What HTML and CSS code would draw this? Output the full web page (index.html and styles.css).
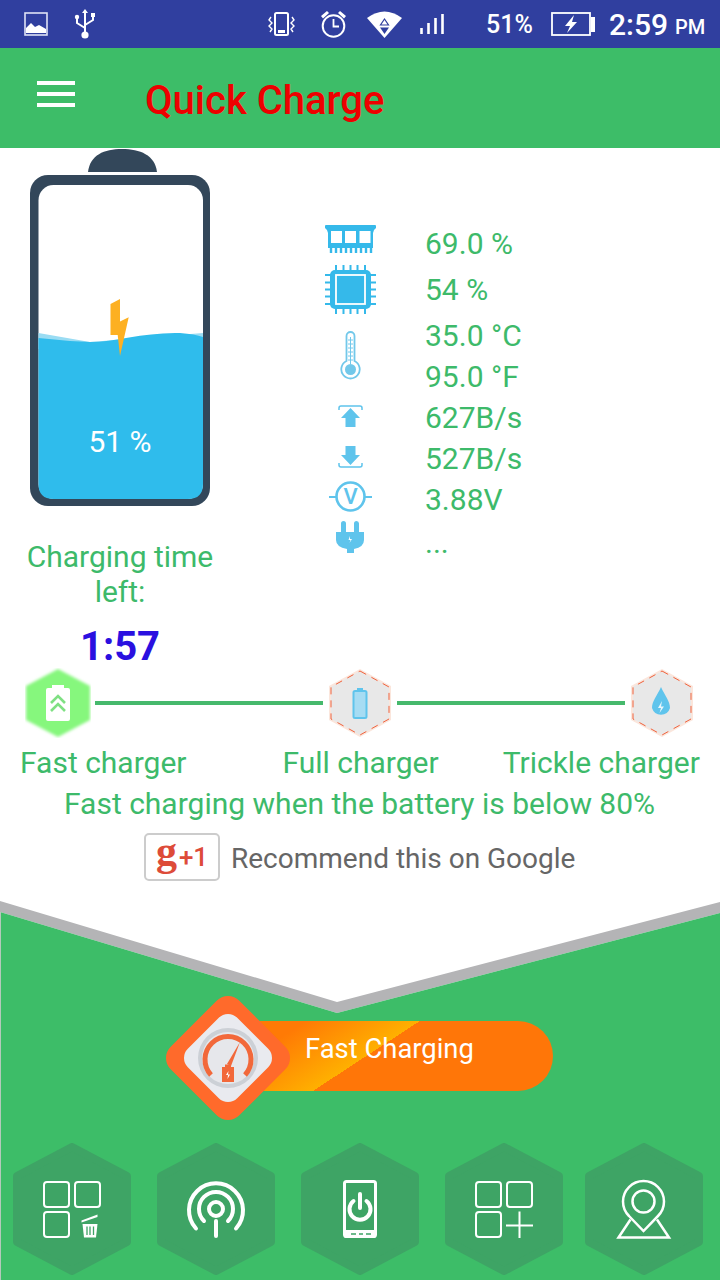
FILE: index.html
```html
<!DOCTYPE html>
<html lang="en">
<head>
    <meta charset="UTF-8">
    <meta name="viewport" content="width=device-width, initial-scale=1.0">
    <title>Quick Charge</title>
    <link rel="stylesheet" href="styles.css">
</head>
<body>

    <!-- Status bar -->
    <div class="status-bar">
        <svg class="st-image" width="24" height="24" viewBox="0 0 24 24"><rect x="1" y="1" width="22" height="22" fill="none" stroke="#dfe3f5" stroke-width="1.6"/><path d="M2 21V16L7 11L11 15L15 13L22 17V21Z" fill="#fff"/></svg>
        <svg class="st-usb" width="22" height="30" viewBox="0 0 22 30"><path d="M11 2V24M11 19L3 14V9M11 16L19 11V7" fill="none" stroke="#fff" stroke-width="2"/><path d="M11 0L14 4H8Z" fill="#fff"/><circle cx="11" cy="26" r="3.6" fill="#fff"/><circle cx="3" cy="8" r="2.2" fill="#fff"/><rect x="17" y="4" width="4" height="4" fill="#fff"/></svg>
        <svg class="st-vibrate" width="27" height="24" viewBox="0 0 27 24"><rect x="7" y="1" width="13" height="22" rx="1.5" fill="none" stroke="#fff" stroke-width="2"/><rect x="10" y="18" width="7" height="3" fill="#fff"/><path d="M3 5L1 8L4 11L1 14L4 17L2 20M24 5L26 8L23 11L26 14L23 17L25 20" fill="none" stroke="#fff" stroke-width="1.4"/></svg>
        <svg class="st-alarm" width="27" height="28" viewBox="0 0 27 28"><circle cx="13.5" cy="16" r="10.8" fill="none" stroke="#fff" stroke-width="2"/><path d="M13.5 9V16.5H19" fill="none" stroke="#fff" stroke-width="1.8"/><path d="M1 6L7 1L9 3L3 8.5ZM26 6L20 1L18 3L24 8.5Z" fill="#fff"/></svg>
        <svg class="st-wifi" width="35" height="27" viewBox="0 0 35 27"><path d="M0 7Q17.5 -6 35 7L17.5 27Z" fill="#fff"/><path d="M17.5 8L21.5 14H13.5Z" fill="none" stroke="#303f9f" stroke-width="1.2"/><path d="M13 16.5H22L17.5 23Z" fill="#303f9f"/></svg>
        <svg class="st-signal" width="24" height="20" viewBox="0 0 24 20"><path d="M1.5 14V20M8.5 9V20M15.5 4V20M22.5 0V20" stroke="#fff" stroke-width="2.6"/></svg>
        <span class="st-level">51%</span>
        <svg class="st-battery" width="44" height="24" viewBox="0 0 44 24"><rect x="1" y="1" width="38" height="22" fill="none" stroke="#fff" stroke-width="1.8"/><rect x="40" y="5" width="4" height="15" fill="#fff"/><path d="M23 3L14 14H19L16 21L26 10H21Z" fill="#fff"/></svg>
        <span class="st-time">2:59</span>
        <span class="st-ampm">PM</span>
    </div>

    <!-- Toolbar -->
    <div class="toolbar">
        <div class="menu-btn"><span></span><span></span><span></span></div>
        <div class="toolbar-title">Quick Charge</div>
    </div>

    <!-- Battery and stats -->
    <div class="top-panel">
        <div class="battery-col">
            <div class="battery">
                <svg width="180" height="357" viewBox="0 0 180 357">
                    <path d="M58 23C60 6 74 0 92 0C110 0 125 6 127 23Z" fill="#33475a"/>
                    <rect x="0" y="26" width="180" height="331" rx="18" fill="#33475a"/>
                    <rect x="8.500" y="36" width="164.500" height="314" rx="15" fill="#fff"/>
                    <path d="M8.500 184L60 193L173 184V200H8.500Z" fill="#9adcf3"/>
                    <path d="M8.500 189Q35 192 60 193C85 193 115 183 150 184Q165 185 173 188V335Q173 350 158 350H23.500Q8.500 350 8.500 335Z" fill="#2fbcec"/>
                    <path d="M80.500 155L90 150V172.500L98.700 168.300L90 207L87.700 186H80.500Z" fill="#fdb022"/>
                </svg>
                <div class="battery-level">51 %</div>
            </div>
            <div class="time-label">Charging time left:</div>
            <div class="time-value">1:57</div>
        </div>

        <div class="stat-icons">
            <svg class="ic-ram" width="51" height="28" viewBox="0 0 51 28"><path d="M0 1Q0 0 1 0H50Q51 0 51 1V3Q48 5 48 8V23H3V8Q3 5 0 3Z" fill="#35b9ea"/><path d="M6 6H17V18H6ZM20 6H31V18H20ZM34.500 6H45.500V18H34.500Z" fill="#fff"/><path d="M6 22V28M11 22V28M16 22V28M21 22V28M26 22V28M31 22V28M36 22V28M41 22V28M46 22V28" stroke="#35b9ea" stroke-width="2.400"/></svg>
            <svg class="ic-cpu" width="51" height="49" viewBox="0 0 51 49"><path d="M11 0V6M18.500 0V6M25.500 0V6M32.500 0V6M40 0V6M11 43V49M18.500 43V49M25.500 43V49M32.500 43V49M40 43V49M0 10H6M0 17.500H6M0 24.500H6M0 31.500H6M0 39H6M45 10H51M45 17.500H51M45 24.500H51M45 31.500H51M45 39H51" stroke="#35b9ea" stroke-width="2"/><rect x="5" y="5" width="41" height="39" rx="5" fill="#35b9ea"/><rect x="11" y="10" width="29" height="29" fill="#35b9ea" stroke="#fff" stroke-width="1.800"/></svg>
            <svg class="ic-thermo" width="21" height="49" viewBox="0 0 21 49"><path d="M6.500 30V5A4 4 0 0 1 14.500 5V30A9.200 9.200 0 1 1 6.500 30Z" fill="#fff" stroke="#72c8ea" stroke-width="1.800"/><circle cx="10.500" cy="38.500" r="5.500" fill="#72c8ea"/><path d="M10.500 6V33M8 9H13M8 13H13M8 17H13M8 21H13M8 25H13M8 29H13" stroke="#72c8ea" stroke-width="1"/></svg>
            <svg class="ic-up" width="25" height="22" viewBox="0 0 25 22"><path d="M1 5V3Q1 1 3 1H22Q24 1 24 3V5" fill="none" stroke="#5fc4ec" stroke-width="1.500"/><path d="M12.500 3L22 13H17.500V22H7.500V13H3Z" fill="#5fc4ec"/></svg>
            <svg class="ic-down" width="25" height="22" viewBox="0 0 25 22"><path d="M1 17V19Q1 21 3 21H22Q24 21 24 19V17" fill="none" stroke="#5fc4ec" stroke-width="1.500"/><path d="M12.500 19L22 9H17.500V0H7.500V9H3Z" fill="#5fc4ec"/></svg>
            <svg class="ic-volt" width="43" height="31" viewBox="0 0 43 31"><circle cx="21.500" cy="15.500" r="14" fill="none" stroke="#5fc4ec" stroke-width="2.600"/><path d="M0 16H7M36 16H43" stroke="#5fc4ec" stroke-width="2.200"/><text x="21.500" y="23" text-anchor="middle" class="volt-letter">V</text></svg>
            <svg class="ic-plug" width="28" height="32" viewBox="0 0 28 32"><path d="M5 2.500A2.500 2.500 0 0 1 10 2.500V11H18V2.500A2.500 2.500 0 0 1 23 2.500V11H28V19Q28 26 18 28V32H11V28Q0 26 0 19V11H5Z" fill="#5fc4ec"/><path d="M14 15L12.500 19H14.500L13.500 22L16 18H14Z" fill="#fff"/></svg>
        </div>

        <div class="stat-values">
            <div class="stat first">69.0 %</div>
            <div class="stat far">54 %</div>
            <div class="stat far">35.0 °C</div>
            <div class="stat">95.0 °F</div>
            <div class="stat">627B/s</div>
            <div class="stat">527B/s</div>
            <div class="stat">3.88V</div>
            <div class="stat near">...</div>
        </div>
    </div>

    <!-- Charge stages -->
    <div class="stages">
        <svg width="66" height="70" viewBox="0 0 66 70">
            <defs>
                <filter id="glow" x="-20%" y="-20%" width="140%" height="140%"><feGaussianBlur stdDeviation="1.600"/></filter>
            </defs>
            <path d="M33 1L65 18V52L33 69L1 52V18Z" fill="#86f77d" filter="url(#glow)"/>
            <path d="M27 20V17H39V20H43Q45 20 45 22V51Q45 53 43 53H23Q21 53 21 51V22Q21 20 23 20Z" fill="#fff"/>
            <path d="M26 35L33 28L40 35M26 43L33 36L40 43" fill="none" stroke="#7fe083" stroke-width="2.600"/>
        </svg>
        <div class="stage-line"></div>
        <svg width="66" height="70" viewBox="0 0 66 70">
            <path d="M33 1L64 18V52L33 69L2 52V18Z" fill="#fbe6dc"/>
            <path d="M33 3L62 19V51L33 67L4 51V19Z" fill="#e8e8e8" stroke="#f0623c" stroke-width="1" stroke-dasharray="7 6"/>
            <rect x="26.500" y="23" width="13" height="27" rx="1.500" fill="#a6dcf3" stroke="#5fc4ec" stroke-width="2"/>
            <rect x="30" y="20" width="6" height="3" fill="#5fc4ec"/>
        </svg>
        <div class="stage-line"></div>
        <svg width="66" height="70" viewBox="0 0 66 70">
            <path d="M33 1L64 18V52L33 69L2 52V18Z" fill="#fbe6dc"/>
            <path d="M33 3L62 19V51L33 67L4 51V19Z" fill="#e8e8e8" stroke="#f0623c" stroke-width="1" stroke-dasharray="7 6"/>
            <path d="M32 19C36 28 41 33 41 40A9.500 10 0 0 1 23 40C23 33 28 28 32 19Z" fill="#5fc4ec"/>
            <path d="M33 33L29 40H32L30.500 45L35 38.500H32Z" fill="#e8f6fc"/>
        </svg>
    </div>
    <div class="stage-labels">
        <span class="lbl-fast">Fast charger</span>
        <span class="lbl-full">Full charger</span>
        <span class="lbl-trickle">Trickle charger</span>
    </div>
    <div class="stage-hint">Fast charging when the battery is below 80%</div>

    <div class="plus-row">
        <div class="plus-btn"><span class="plus-g">g</span><span class="plus-one">+1</span></div>
        <span class="plus-text">Recommend this on Google</span>
    </div>

    <!-- Bottom panel -->
    <div class="bottom-panel">
        <svg class="panel-bg" width="720" height="379" viewBox="0 0 720 379">
            <path d="M0 0L337 101L720 1V12L337 112L0 11Z" fill="#b4b4b6"/>
            <path d="M0 11L337 112L720 12V379H0Z" fill="#3dbd68"/>
            <rect x="0" y="11" width="1" height="368" fill="#b4c9bb"/>
        </svg>

        <div class="mode">
            <svg class="mode-icon" width="124" height="124" viewBox="0 0 124 124">
                <defs>
                    <linearGradient id="faceGrad" x1="0" y1="0" x2="1" y2="1"><stop offset="0" stop-color="#eef0f4"/><stop offset="1" stop-color="#dfe1e7"/></linearGradient>
                </defs>
                <path d="M62 16L108 62L62 108L16 62Z" fill="#ff6a2b" stroke="#ff6a2b" stroke-width="32" stroke-linejoin="round"/>
                <path d="M62 31L93 62L62 93L31 62Z" fill="url(#faceGrad)" stroke="#e9eaef" stroke-width="26" stroke-linejoin="round"/>
                <circle cx="62" cy="62" r="30" fill="#ccd0d6"/>
                <circle cx="62" cy="62" r="26" fill="#e6e7eb"/>
                <path d="M45 79A23 23 0 1 1 79 79" fill="none" stroke="#f2683a" stroke-width="5"/>
                <path d="M61 68L74 46L65 70Z" fill="#f2683a"/>
                <path d="M56 71H59V68.500H65V71H68V86H56Z" fill="#f2683a"/>
                <path d="M62.500 75L60 79H62L61.500 83L64 78.500H62Z" fill="#fff"/>
            </svg>
            <div class="mode-pill">Fast Charging</div>
        </div>

        <div class="tools">
            <svg class="tile" width="118" height="132" viewBox="0 0 118 132">
                <path class="tile-hex" d="M59 4L114 33V99L59 128L4 99V33Z"/>
                <g class="tile-line">
                    <rect x="31" y="39" width="25" height="25" rx="3"/>
                    <rect x="62" y="39" width="25" height="25" rx="3"/>
                    <rect x="31" y="69" width="25" height="25" rx="3"/>
                </g>
                <path d="M68.500 77.500L84.500 71.500V74L68.500 79.500Z" fill="#fff"/>
                <path d="M69.500 81H84.500L83 94.500H71Z" fill="#fff"/>
                <path d="M74 83.500V92M77 83.500V92M80.500 83.500V92" stroke="#3ea465" stroke-width="1.300"/>
            </svg>
            <svg class="tile" width="118" height="132" viewBox="0 0 118 132">
                <path class="tile-hex" d="M59 4L114 33V99L59 128L4 99V33Z"/>
                <g class="tile-wide">
                    <circle cx="59" cy="66" r="7"/>
                    <path d="M47 78A17 17 0 1 1 71 78"/>
                    <path d="M39 85.500A27 27 0 1 1 79 85.500"/>
                    <path d="M59 78V93"/>
                </g>
            </svg>
            <svg class="tile" width="118" height="132" viewBox="0 0 118 132">
                <path class="tile-hex" d="M59 4L114 33V99L59 128L4 99V33Z"/>
                <rect x="43.500" y="38.500" width="31" height="55" rx="2" fill="none" stroke="#fff" stroke-width="3"/>
                <rect x="43" y="87" width="32" height="8" rx="2" fill="#fff"/>
                <path d="M50 91H55M58 91H62M65 91H70" stroke="#3ea465" stroke-width="1.500"/>
                <g class="tile-wide">
                    <path d="M52.500 58A10.500 10.500 0 1 0 65.500 58"/>
                    <path d="M59 51V65"/>
                </g>
            </svg>
            <svg class="tile" width="118" height="132" viewBox="0 0 118 132">
                <path class="tile-hex" d="M59 4L114 33V99L59 128L4 99V33Z"/>
                <g class="tile-line">
                    <rect x="31" y="39" width="25" height="25" rx="3"/>
                    <rect x="62" y="39" width="25" height="25" rx="3"/>
                    <rect x="31" y="69" width="25" height="25" rx="3"/>
                    <path d="M74.500 68.500V95M61 82.500H88"/>
                </g>
            </svg>
            <svg class="tile tile-last" width="118" height="132" viewBox="0 0 118 132">
                <path class="tile-hex" d="M59 4L114 33V99L59 128L4 99V33Z"/>
                <g class="tile-line thick">
                    <path d="M44 73A20.500 20.500 0 1 1 73 73L58.500 88Z"/>
                    <circle cx="58.500" cy="58.500" r="11"/>
                    <path d="M45.500 76.500L33.500 94.500H84L72 76.500"/>
                </g>
            </svg>
        </div>
    </div>

</body>
</html>
```

FILE: styles.css
```css
body {
    font-family: Roboto, "Liberation Sans", sans-serif;
    margin: 0;
    padding: 0;
    width: 720px;
    height: 1280px;
    overflow: hidden;
    background-color: #fff;
    color: #3dba6a;
}

svg {
    display: block;
    flex: none;
}

/* Status bar */
.status-bar {
    height: 48px;
    background-color: #303f9f;
    color: #fff;
    display: flex;
    align-items: center;
    padding-left: 24px;
}

.st-usb { margin-left: 26px; }
.st-vibrate { margin-left: 172px; }
.st-alarm { margin-left: 25px; }
.st-wifi { margin-left: 20px; }
.st-signal { margin-left: 18px; }
.st-battery { margin-left: 20px; }

.st-level {
    margin-left: 42px;
    font-size: 25px;
    font-weight: 500;
    width: 45px;
    white-space: nowrap;
}

.st-time {
    margin-left: 14px;
    font-size: 30px;
    font-weight: 500;
}

.st-ampm {
    margin-left: 7px;
    margin-top: 6px;
    font-size: 20px;
    font-weight: 500;
}

/* Toolbar */
.toolbar {
    height: 100px;
    background-color: #3dbd68;
    display: flex;
    align-items: center;
    padding-left: 37px;
}

.menu-btn {
    display: flex;
    flex-direction: column;
    gap: 7px;
    width: 38px;
    margin-right: 70px;
    margin-top: -8px;
}

.menu-btn span {
    height: 4px;
    background-color: #fff;
}

.toolbar-title {
    font-size: 40px;
    font-weight: 500;
    color: #ee0000;
    margin-top: 4px;
}

/* Battery and stats */
.top-panel {
    height: 520px;
    display: flex;
}

.battery-col {
    width: 240px;
    text-align: center;
}

.battery {
    position: relative;
    width: 180px;
    margin: 1px 0 0 30px;
}

.battery-level {
    position: absolute;
    left: 0;
    right: 0;
    top: 275px;
    text-align: center;
    color: #fff;
    font-size: 30px;
}

.time-label {
    font-size: 30px;
    line-height: 35px;
    margin: 33px 20px 0;
}

.time-value {
    font-size: 40px;
    font-weight: 700;
    line-height: 47px;
    color: #2a10e0;
    margin-top: 14px;
}

.stat-icons {
    width: 60px;
    margin-left: 80px;
    display: flex;
    flex-direction: column;
    align-items: center;
    padding-top: 77px;
}

.ic-cpu { margin-top: 12px; }
.ic-thermo { margin-top: 17px; }
.ic-up { margin-top: 25px; }
.ic-down { margin-top: 19px; }
.ic-volt { margin-top: 13px; }
.ic-plug { margin-top: 9px; }

.volt-letter {
    font-family: Roboto, sans-serif;
    font-size: 22px;
    font-weight: 500;
    fill: #5fc4ec;
}

.stat-values {
    margin-left: 45px;
    padding-top: 75px;
    font-size: 30px;
}

.stat {
    height: 41px;
    line-height: 41px;
}

.stat.far { margin-top: 5px; }
.stat.near { margin-top: 2px; }

/* Charge stages */
.stages {
    display: flex;
    align-items: center;
    gap: 4px;
    padding: 0 25px;
}

.stage-line {
    flex: 1;
    height: 4px;
    background-color: #46b96c;
}

.stage-labels {
    font-size: 30px;
    line-height: 40px;
    display: flex;
    padding-left: 20px;
    margin-top: 5px;
    white-space: nowrap;
}

.lbl-full { margin-left: 96px; }
.lbl-trickle { margin-left: 64px; }

.stage-hint {
    font-size: 30px;
    line-height: 40px;
    margin-top: 1px;
    padding-left: 64px;
    white-space: nowrap;
}

.plus-row {
    display: flex;
    align-items: center;
    padding-left: 144px;
    margin-top: 9px;
}

.plus-btn {
    width: 72px;
    height: 44px;
    border: 2px solid #cccccc;
    border-radius: 5px;
    display: flex;
    align-items: center;
    justify-content: center;
    color: #dd4b39;
}

.plus-g {
    font-family: "Liberation Serif", serif;
    font-weight: 700;
    font-size: 42px;
    line-height: 44px;
    margin-top: -12px;
}

.plus-one {
    font-size: 26px;
    font-weight: 500;
    margin-left: 2px;
}

.plus-text {
    font-size: 28px;
    color: #666666;
    margin-left: 11px;
    margin-top: 2px;
    white-space: nowrap;
}

/* Bottom panel */
.bottom-panel {
    position: absolute;
    left: 0;
    right: 0;
    top: 901px;
    height: 379px;
    padding-top: 95px;
    box-sizing: border-box;
}

.panel-bg {
    position: absolute;
    left: 0;
    top: 0;
}

.mode {
    position: relative;
    display: flex;
    align-items: center;
    margin-left: 166px;
}

.mode-icon {
    position: relative;
    z-index: 1;
}

.mode-pill {
    width: 325px;
    height: 70px;
    line-height: 56px;
    box-sizing: border-box;
    margin: -4px 0 0 -62px;
    padding-left: 77px;
    border-radius: 0 35px 35px 0;
    background: linear-gradient(146.800deg, #ff7a05 18%, #ffb000 44.400%, #ff7608 44.400%);
    color: #fff;
    font-size: 27.400px;
}

.tools {
    position: relative;
    display: flex;
    gap: 26px;
    padding-left: 13px;
    margin-top: 23px;
}

.tile-last { margin-left: -4px; }

.tile-hex {
    fill: #3ea465;
    stroke: #3ea465;
    stroke-width: 8;
    stroke-linejoin: round;
}

.tile-line {
    fill: none;
    stroke: #fff;
    stroke-width: 2;
}

.tile-line.thick { stroke-width: 2.500; }

.tile-wide {
    fill: none;
    stroke: #fff;
    stroke-width: 4;
    stroke-linecap: round;
}
```
